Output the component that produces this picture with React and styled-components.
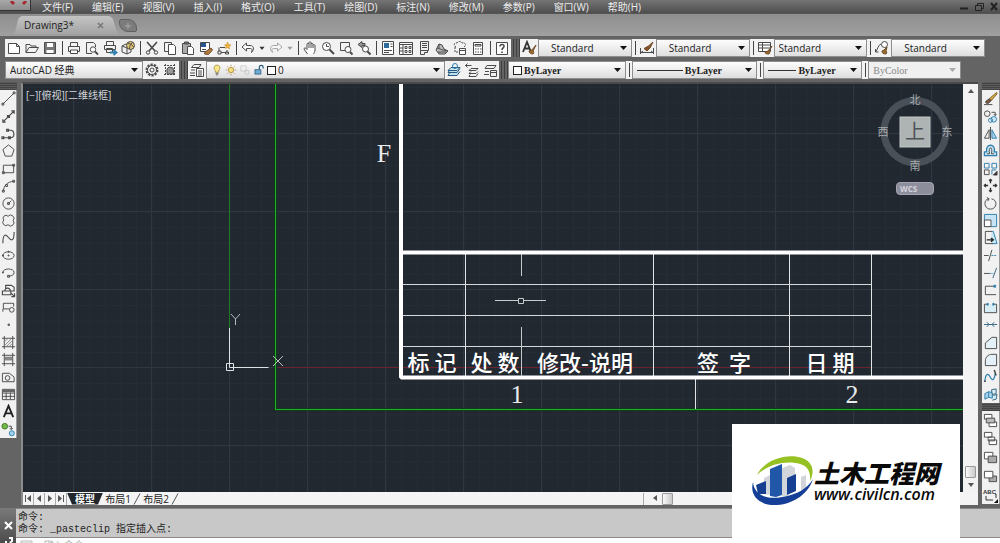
import React from "react";
import styled, { createGlobalStyle } from "styled-components";

const GlobalStyle = createGlobalStyle`
  * {
    box-sizing: border-box;
  }
  body {
    margin: 0;
    overflow: hidden;
    background: #646464;
    font-family: "Open Sans", "Noto Sans CJK SC", sans-serif;
  }
  button, input, select {
    font: inherit;
    color: inherit;
    border: 0;
    padding: 0;
    margin: 0;
    background: none;
  }
`;

const Window = styled.div`
  position: relative;
  display: flex;
  flex-direction: column;
  height: 100vh;
  overflow: hidden;
  background: #646464;
`;

/* ---------- menu bar ---------- */

const MenuBar = styled.header`
  display: flex;
  align-items: center;
  height: 13px;
  flex: none;
  background: linear-gradient(#747474, #4e4e4e);
  color: #ececec;
`;

const AppButton = styled.button`
  width: 31px;
  height: 11px;
  align-self: flex-start;
  background: linear-gradient(#a8a8a8, #8c8c8c);
  border: 1px solid #333;
  border-top: 0;
  border-left: 0;
  line-height: 0;
`;

const Menus = styled.nav`
  display: flex;
  flex: 1;
  gap: 19px;
  padding-left: 11px;
`;

const MenuItem = styled.button`
  font-size: 10px;
  line-height: 12px;
  white-space: nowrap;
`;

const WindowButtons = styled.div`
  display: flex;
  gap: 4px;
`;

const WindowButton = styled.button`
  width: 11px;
  height: 12px;
  line-height: 0;
`;

/* ---------- file tabs ---------- */

const FileTabs = styled.div`
  display: flex;
  align-items: flex-end;
  height: 23px;
  flex: none;
  padding: 0 0 2px 12px;
  background: linear-gradient(#8e8e8e, #a0a0a0);
  border-top: 1px solid #555;
`;

const FileTab = styled.div`
  display: flex;
  align-items: center;
  justify-content: space-between;
  width: 107px;
  height: 18px;
  padding: 0 15px 0 12px;
  background: linear-gradient(#c4c4c4, #a4a4a4);
  clip-path: polygon(0 100%, 3% 88%, 6% 12%, 9% 0, 91% 0, 94% 12%, 98% 88%, 100% 100%);
  color: #222;
  font-size: 10px;
`;

const TabClose = styled.button`
  width: 8px;
  line-height: 0;
`;

const NewTab = styled.button`
  width: 18px;
  height: 13px;
  margin-bottom: 2px;
  background: #7c7c7c;
  border: 1px solid #606060;
  border-radius: 2px 9px 2px 9px;
  line-height: 0;
`;

/* ---------- toolbars ---------- */

const Toolbars = styled.div`
  flex: none;
  display: flex;
  flex-direction: column;
  gap: 4px;
  height: 46px;
  padding: 3px 0 0;
  background: #646464;
`;

const ToolRow = styled.div`
  display: flex;
  align-items: stretch;
  height: 18px;
  padding-left: 5px;
  padding-right: ${(p) => p.$end}px;
`;

const Strip = styled.div`
  display: flex;
  align-items: center;
  flex: ${(p) => (p.$grow ? "1 1 0" : "none")};
  background: #f2f2f2;
`;

const Grip = styled.span`
  width: 9px;
  flex: none;
  background: repeating-linear-gradient(90deg, #646464 0 2px, #3f3f3f 2px 3px);
`;

const ToolButton = styled.button`
  display: flex;
  align-items: center;
  justify-content: center;
  flex: none;
  width: ${(p) => (p.$narrow ? 10 : 18)}px;
  height: 18px;
  opacity: ${(p) => (p.$dim ? 0.45 : 1)};
`;

const Divider = styled.span`
  width: 6px;
  height: 14px;
  flex: none;
  border-left: 1px solid #f2f2f2;
  background: linear-gradient(90deg, transparent 2px, #444 2px 3px, transparent 3px);
`;

const Combo = styled.label`
  display: flex;
  align-items: center;
  flex: 1 1 ${(p) => p.$basis}px;
  min-width: 0;
  height: 18px;
  padding: 0 4px 0 4px;
  gap: 2px;
  background: ${(p) => (p.$off ? "#f0f0f0" : "linear-gradient(#fdfdfd, #dedede)")};
  border: 1px solid #8d8d8d;
  color: ${(p) => (p.$off ? "#888" : "#222")};
`;

const Select = styled.select`
  appearance: none;
  flex: 1;
  min-width: 0;
  height: 16px;
  padding-left: ${(p) => p.$indent || 0}px;
  font-size: 10px;
  font-weight: ${(p) => (p.$bold ? 700 : 400)};
  font-family: ${(p) =>
    p.$serif ? '"Liberation Serif", serif' : '"Open Sans", "Noto Sans CJK SC", sans-serif'};
  outline: none;
  opacity: 1;
  color: inherit;
`;

const Swatch = styled.span`
  width: 9px;
  height: 9px;
  flex: none;
  border: 1px solid #222;
  background: #fff;
`;

const LinePreview = styled.span`
  width: ${(p) => p.$w}px;
  height: 1px;
  flex: none;
  background: #333;
`;

/* ---------- workspace ---------- */

const Workspace = styled.main`
  display: flex;
  flex: 1;
  min-height: 0;
`;

const SideTools = styled.aside`
  display: flex;
  flex-direction: column;
  width: ${(p) => p.$w}px;
  flex: none;
`;

const SideGrip = styled.span`
  height: 8px;
  flex: none;
  background: repeating-linear-gradient(#5a5a5a 0 1px, #444 1px 2px);
`;

const SideStrip = styled.div`
  display: grid;
  grid-auto-rows: 1fr;
  justify-items: center;
  flex: none;
  height: ${(p) => p.$h}px;
  background: #f1f1f1;
  border-right: 1px solid #999;
`;

const SideButton = styled.button`
  width: 16px;
  line-height: 0;
  display: flex;
  align-items: center;
  justify-content: center;
  min-height: 0;
`;

const DocFrame = styled.section`
  display: flex;
  flex-direction: column;
  flex: 1;
  min-width: 0;
  margin: 0 4px 3px;
  border-left: 2px solid #8c8c8c;
  border-top: 2px solid #4a4a4a;
  background: #f4f4f4;
`;

const DocBody = styled.div`
  display: flex;
  flex: 1;
  min-height: 0;
`;

const Canvas = styled.div`
  position: relative;
  flex: 1;
  min-width: 0;
  overflow: hidden;
  background: #212830;
`;

const Drawing = styled.svg`
  display: block;
  width: 100%;
  height: 100%;
`;

const ViewLabel = styled.button`
  position: absolute;
  left: 3px;
  top: 5px;
  color: #d3d6d9;
  font-size: 10px;
  line-height: 13px;
`;

const ViewCube = styled.div`
  position: absolute;
  top: 8px;
  right: 10px;
  display: flex;
  flex-direction: column;
  align-items: center;
`;

const WcsButton = styled.button`
  width: 38px;
  height: 13px;
  margin-top: 9px;
  padding-left: 3px;
  border: 1px solid #a6a6b2;
  border-radius: 4px;
  background: #8d8e9c;
  color: #d4d4dc;
  font-size: 8px;
  font-weight: 700;
  line-height: 10px;
  text-align: left;
`;

const VScroll = styled.div`
  display: flex;
  flex-direction: column;
  align-items: center;
  justify-content: space-between;
  width: 15px;
  flex: none;
  padding: 4px 0;
  background: #f3f3f3;
`;

const ScrollEnd = styled.div`
  display: flex;
  flex-direction: column;
  align-items: center;
  gap: 3px;
`;

const ScrollThumb = styled.span`
  width: 11px;
  height: 12px;
  border: 1px solid #999;
  border-radius: 1px;
  background: linear-gradient(90deg, #fafafa, #c9c9c9);
`;

const ScrollButton = styled.button`
  width: 11px;
  height: 7px;
  line-height: 0;
`;

const LayoutBar = styled.div`
  display: flex;
  align-items: center;
  height: 13px;
  flex: none;
  background: #f4f4f4;
  color: #222;
`;

const LayoutNav = styled.button`
  width: 11px;
  height: 12px;
  border-right: 1px solid #aaa;
  line-height: 0;
`;

const LayoutTab = styled.button`
  height: 12px;
  width: ${(p) => (p.$active ? 36 : 30)}px;
  font-size: 10px;
  line-height: 12px;
  white-space: nowrap;
  font-weight: ${(p) => (p.$active ? 700 : 400)};
  color: ${(p) => (p.$active ? "#fff" : "#222")};
  background: ${(p) => (p.$active ? "#20262c" : "none")};
  clip-path: ${(p) => (p.$active ? "polygon(0 0, 100% 0, 86% 100%, 14% 100%)" : "none")};
`;

const HScroll = styled.div`
  display: flex;
  align-items: center;
  gap: 5px;
  flex: 0 1 335px;
  margin-left: auto;
  padding-left: 2px;
  border-left: 1px solid #aaa;
`;

/* ---------- command line ---------- */

const CommandArea = styled.footer`
  display: flex;
  height: 35px;
  flex: none;
`;

const CommandHandle = styled.div`
  display: flex;
  flex-direction: column;
  align-items: center;
  justify-content: flex-end;
  gap: 7px;
  width: 16px;
  flex: none;
  background: linear-gradient(#7a7a7a, #4c4c4c);
`;

const CommandBody = styled.div`
  flex: 1;
  min-width: 0;
  border-top: 1px solid #888;
  background: #c8c8c8;
`;

const History = styled.div`
  padding: 3px 2px 1px;
  color: #222;
  font-family: "Liberation Mono", "Noto Sans CJK SC", monospace;
  font-size: 10px;
  line-height: 12px;
  white-space: pre;
`;

const Prompt = styled.label`
  display: flex;
  align-items: center;
  gap: 5px;
  height: 14px;
  padding-left: 4px;
  border-top: 1px solid #8a8a8a;
  background: #fff;
`;

const PromptInput = styled.input`
  flex: 1;
  height: 12px;
  font-size: 10px;
  outline: none;
  &::placeholder {
    color: #b4b4b4;
  }
`;

/* ---------- site badge ---------- */

const SiteBadge = styled.a`
  position: absolute;
  right: 40px;
  bottom: 0;
  display: flex;
  align-items: center;
  width: 228px;
  height: 119px;
  padding: 0 0 6px 20px;
  background: #fff;
  color: #0a0a0a;
  text-decoration: none;
`;

const BadgeText = styled.span`
  display: flex;
  flex-direction: column;
  white-space: nowrap;
  font-style: italic;
`;

const BadgeName = styled.strong`
  font-family: "Noto Sans CJK SC", sans-serif;
  font-size: 25px;
  font-weight: 900;
  line-height: 26px;
`;

const BadgeUrl = styled.span`
  font-family: "Open Sans", sans-serif;
  font-size: 16px;
  font-weight: 600;
  line-height: 18px;
`;

/* ---------- icons ---------- */

const K = "#4a4a4a";
const B = "#2f7fae";

const icons = {
  new: <path d="M2.500 3.500h8l3 3v7h-11zM10.500 3.500v3h3" fill="#fff" />,
  open: <path d="M2 12.500v-8h4l1 1.500h5v2M2 12.500l3-5h9.500l-3 5z" />,
  save: (
    <>
      <path d="M2.500 2.500h11v11h-11z" fill="#777" />
      <path d="M5 3h6v4H5zM4.500 10h7v3h-7z" fill="#fff" stroke="none" />
    </>
  ),
  print: (
    <>
      <path d="M4.500 6V2.500h7V6M2.500 6.500h11v5h-11z" />
      <path d="M4.500 10h7v3.500h-7z" fill="#fff" />
    </>
  ),
  preview: (
    <>
      <path d="M8 13.500H2.500v-11h7l2 2V7" />
      <circle cx="9" cy="9.500" r="2.700" fill="#fff" />
      <path d="M11 11.500l3 3" strokeWidth="1.800" />
    </>
  ),
  publish: (
    <>
      <path d="M4.500 5V1.500h7V5M2.500 5.500h11v4h-11zM4.500 8.500h6v4h-6z" />
      <path d="M8 12.500h5M11.500 10l3 2.500-3 2.500" stroke={B} strokeWidth="1.800" />
    </>
  ),
  cube: (
    <>
      <path d="M2 6l4-2 5 2v6l-4 2-5-2zM2 6l5 2 4-2M7 8v6" fill="#eee" />
      <circle cx="10.500" cy="5.500" r="4" fill="#e2c56d" />
      <path d="M8 3.500c2 0 4 1 5.500 3.500M9.500 9c0-3 1-5 3-6.500" />
    </>
  ),
  cut: (
    <>
      <path d="M3 2l8 9M13 2l-8 9" strokeWidth="1.600" />
      <circle cx="4" cy="12.500" r="1.700" />
      <circle cx="12" cy="12.500" r="1.700" />
    </>
  ),
  copy: (
    <>
      <path d="M2.500 2.500h7v9h-7z" />
      <path d="M6.500 4.500h5l2 2v8h-7z" fill="#fff" />
    </>
  ),
  paste: (
    <>
      <path d="M2.500 3.500h8v10h-8z" fill="#aaa" />
      <path d="M4.500 2h4v2h-4z" fill="#777" />
      <path d="M7.500 6.500h4l2 2v6h-6z" fill="#fff" />
    </>
  ),
  match: (
    <>
      <path d="M2.500 2.500h9v9h-9z" fill="#fff" />
      <path d="M3 3h5v4H3z" fill="#25558e" stroke="none" />
      <path d="M4 9.500h4" />
      <path d="M7 12l6-4 1.500 2-4 4.500-4-.5z" fill="#b07a45" stroke="#7a5028" />
    </>
  ),
  block: (
    <>
      <path d="M4 7.500h5M3 7.500v4M2 11h3v3H2zM11 10v3M9.500 12h3v2h-3zM5 12.500h5" />
      <path d="M11.500 2l1 2.500L15 5l-2 1.500.500 2.500-2-1.500-2 1 .500-2.300L8.500 5l2.300-.500z" fill="#f0b640" stroke="#c48b1b" strokeWidth=".6" />
    </>
  ),
  undo: <path d="M6.500 3L2 7l4.500 4V8.500h4c1.500 0 2 1.500 1 4 3-3 2.500-7-1.500-7H6.500z" fill="#fff" />,
  redo: <path d="M9.500 3L14 7l-4.500 4V8.500h-4c-1.500 0-2 1.500-1 4-3-3-2.500-7 1.500-7h3.500z" fill="#fff" />,
  caret: <path d="M4 6h8l-4 5z" fill="#333" stroke="none" />,
  pan: <path d="M5.500 14L2 9c0-1 1-1.500 2-.500l1 1V4c.500-1 1.500-1 2 0V2.500c.500-1 1.500-1 2 0V4c.500-1 1.500-1 2 0v1.500c.500-1 2-1 2 0V10c0 2-1 3-1.500 4M7 4v4M9 4v4M11 5.500V8" fill="#fff" />,
  zoom: (
    <>
      <circle cx="6.500" cy="6.500" r="4" fill="#fff" />
      <path d="M6.500 4v2.500H9" />
      <path d="M9.500 9.500l4.500 4.500" strokeWidth="2" />
    </>
  ),
  zoomWindow: (
    <>
      <path d="M2.500 2.500h9v8h-9z" />
      <circle cx="10" cy="9.500" r="3" fill="#fff" />
      <path d="M12 12l2.500 2.500" strokeWidth="2" />
    </>
  ),
  zoomPrev: (
    <>
      <path d="M6 1.500L2 4.500l4 3v-2h3v-2H6z" fill="#999" />
      <circle cx="9.500" cy="9" r="3" fill="#fff" />
      <path d="M11.500 11.500l3 3" strokeWidth="2" />
    </>
  ),
  props: (
    <>
      <path d="M2.500 1.500h11v13h-11z" fill="#fff" />
      <path d="M4 3h5v5H4z" fill="#2d6c9c" stroke="none" />
      <path d="M4 10.500h8M4 12.500h5M10.500 4h2M10.500 6.500h2" />
    </>
  ),
  center: (
    <>
      <path d="M1.500 2.500h13v12h-13zM1.500 4.500h13" fill="#fff" />
      <path d="M5 5v9M1.500 8h3.500M1.500 11h3.500M7 6.500h2v2H7zM11 6.500h2v2h-2zM7 10.500h2v2H7zM11 10.500h2v2h-2z" />
    </>
  ),
  palette: <path d="M4.500 1.500h8v9h-8zM6 3.500h5M6 5.500h5M6 7.500h5M4.500 10.500v4h4v-2h3v-2" />,
  sheets: <path d="M2 10l3-6 3 1 2 4 4 2-3 3H5zM3 8l6 2 5 1M4 12h8M5 4v4" fill="#bbb" />,
  markup: (
    <>
      <path d="M4 7C1 6 2 2 5 3c1-2 4-2 5 0 3-1 5 2 2 4M3 7v5h3" strokeDasharray="2 1" />
      <path d="M7.500 8.500h6v6h-6zM7.500 10.500h6" fill="#fff" stroke={K} />
    </>
  ),
  calc: <path d="M3.500 2.500h9v12h-9zM5 4.500h6v1.500H5zM5 9h1.500M7.500 9H9M10 9h1.500M5 12h1.500M7.500 12H9M10 12h1.500" fill="#fff" />,
  help: (
    <>
      <path d="M2.500 2.500h11v12h-11z" fill="#fff" />
      <path d="M6 6.500c0-3 4.500-2.500 4 0C9.800 8 8 8 8 10M8 11.500v1.500" strokeWidth="1.600" />
    </>
  ),
  textStyle: (
    <>
      <path d="M2 12L6 2l4 10M3.500 8.500h5" strokeWidth="1.800" stroke="#333" />
      <path d="M15 5l-4 5-3 1c0 2 2 3 4 3 1-1 1-2 0-3z" fill="#9c6a2d" stroke="#6d4b22" />
    </>
  ),
  dimStyle: (
    <>
      <path d="M1.500 8v6M14.500 8v6M2 12.500h12M2 12.500l2-1.500M14 12.500l-2-1.500" />
      <path d="M14 2L9.500 6 5 8.500l3 2.500 3-3z" fill="#86512b" stroke="#6d4b22" />
    </>
  ),
  tableStyle: (
    <>
      <path d="M1.500 2.500h12v9h-12zM1.500 5h12M1.500 8h12M5.500 3v8" fill="#fff" />
      <path d="M15 6l-4 5-3 1c0 2 2 2 4 2 1-1 1-2 0-3z" fill="#9c6a2d" stroke="#6d4b22" />
    </>
  ),
  leader: (
    <>
      <path d="M1.500 12C4 9 4 5 7 4M1.500 12v-3M1.500 12h3" />
      <circle cx="10.500" cy="4.500" r="3" fill="#fff" />
      <path d="M13 7l-3 3-2 1c0 2 1 3 4 3 1-1 1-2 0-3z" fill="#9c6a2d" stroke="#6d4b22" />
    </>
  ),
  gear: (
    <>
      <circle cx="8" cy="8" r="5.500" strokeDasharray="2.200 1.200" strokeWidth="2" />
      <circle cx="8" cy="8" r="4.500" />
      <circle cx="8" cy="8" r="2" />
    </>
  ),
  wsSave: (
    <>
      <path d="M2 3.500h12M2 12.500h12M3.500 2v12M12.500 2v12" strokeDasharray="2 1" />
      <path d="M5 7l2-2 4 1 1 6H5z" fill="#999" />
    </>
  ),
  layers: (
    <>
      <path d="M5 2.500h7l-2 3H2.500zM2 8h4M1 11h5M1 13.500h5" />
      <path d="M7.500 6.500h7v8h-7zM9 9h4M9 11h4M9 13h4" fill="#fff" />
    </>
  ),
  bulb: (
    <>
      <path d="M8 1.500c-4 0-5 4-2.500 7L6 11h4l.5-2.500C13 5.500 12 1.500 8 1.500z" fill="#fbe68a" stroke="#9b8433" />
      <path d="M6 12.500h4M6.500 14.500h3" />
    </>
  ),
  sun: (
    <>
      <circle cx="8" cy="8" r="3.500" fill="#f8df7b" stroke="#a5842d" />
      <path d="M8 1v2M8 13v2M1 8h2M13 8h2M3 3l1.500 1.500M11.500 11.500L13 13M13 3l-1.500 1.500M4.500 11.500L3 13" stroke="#a5842d" />
    </>
  ),
  frozen: <path d="M2.500 2.500h7v7h-7zM8 8.500h5v5H8z" stroke="#c2c2c2" />,
  lock: (
    <>
      <path d="M2.500 7.500h8v6h-8z" fill="#6faad0" stroke="#27597f" />
      <path d="M8.500 7V4c0-3 5-3 5 0v2" stroke="#27597f" strokeWidth="1.600" />
    </>
  ),
  layerCur: (
    <>
      <path d="M5 5.500h9l-3 3H2zM3.500 8.500L2 10.500h9l3-4M3.500 11L2 13.500h9l3-4" fill="#bfe0ef" stroke="#27597f" />
      <circle cx="9" cy="4" r="2.500" stroke={B} />
    </>
  ),
  layerPrev: <path d="M1.500 3.500h6M1.500 3.500l2-2M1.500 3.500l2 2M7 6.500h7l-2 2H5zM7 9.500L5 11.500h7l2-2M6 12.500l-1 2h7l2-3" />,
  layerState: <path d="M5 3.500h9l-2 3H3zM3 9.500h4M2 12.500h5M8.500 8.500h6v6h-6zM8.500 10.500h6" />,

  line: <path d="M2 14L14 2M1 13h2v2H1zM13 1h2v2h-2z" />,
  xline: <path d="M2 14L14 2M2 11v3h3M14 5V2h-3M7 7h2v2H7z" strokeWidth="1.300" />,
  pline: <path d="M2 12.500h8c5 0 5-8 0-8H7M1 11.500h2v2H1zM8 11.500h2v2H8zM6 3.500h2v2H6z" strokeWidth="1.200" />,
  polygon: <path d="M8 2l6 5-2.500 7h-7L2 7z" />,
  rect: <path d="M2.500 4.500h11v8h-11zM1.500 11.500h2v2h-2zM12.500 3.500h2v2h-2z" />,
  arc: <path d="M2.500 14C3 8 7 4 13.500 3.500M1.500 13h2v2h-2zM5 7h2v2H5zM12.500 2.500h2v2h-2z" />,
  circle: (
    <>
      <circle cx="8" cy="8" r="6" />
      <path d="M8 8l3-3M7 7h2v2H7z" />
    </>
  ),
  cloud: <path d="M7.500 3.500a2.800 2.800 0 1 0-4.500 4 3 3 0 1 0 4.500 5 3 3 0 1 0 5.500-4.500A3 3 0 1 0 7.500 3.500z" />,
  spline: <path d="M2 14C2 4 5 4 8 8s6 4 6-6" strokeWidth="1.200" />,
  ellipse: (
    <>
      <ellipse cx="8" cy="8" rx="6" ry="4" />
      <path d="M7.500 7.500h1v1h-1zM1.500 7.500h1v1h-1zM7.500 3.500h1v1h-1z" />
    </>
  ),
  ellArc: <path d="M2 8c0-5 12-5 12 0 0 3-4 4-6 4M1.500 7.500h1v1h-1zM7 11h2v2H7z" />,
  insert: <path d="M5 6V2.500h6l3 2v4h-3M1.500 8.500h9v4h-9zM4 8c1-4 6-3 6 1M11 11l3 3M14.500 11v3.500H11" strokeWidth="1.200" />,
  makeBlock: (
    <>
      <path d="M9 9.500H2.500v-6h11V7M2 9.500v3" />
      <circle cx="11.500" cy="10.500" r="2.500" />
    </>
  ),
  point: <path d="M7.500 7.500h1.500V9H7.500z" />,
  hatch: (
    <>
      <path d="M1 3.500h14M1 12.500h14M3.500 1v14M12.500 1v14" />
      <path d="M4 7l3-3M4 11l7-7M6 12l6-6M9 12l3-3" stroke="#888" />
    </>
  ),
  gradient: (
    <>
      <path d="M4 5h8v4H4z" fill="#888" stroke="none" />
      <path d="M1 3.500h14M1 12.500h14M3.500 1v14M12.500 1v14" />
    </>
  ),
  region: (
    <>
      <path d="M1.500 12.500v-9H9l5 4v5z" />
      <circle cx="7" cy="8.500" r="2.500" />
    </>
  ),
  table: (
    <>
      <path d="M1.500 2.500h13v11h-13zM1.500 6.500h13M1.500 10h13M5.500 6v7M10 6v7" />
      <path d="M2 3h12v2.500H2z" fill="#666" stroke="none" />
    </>
  ),
  text: <path d="M3 14L8 2l5 12M5 10h6" strokeWidth="2" stroke="#222" />,
  addSel: (
    <>
      <circle cx="4" cy="4.500" r="3" fill="#76b84c" stroke="#3f7a24" />
      <circle cx="11.500" cy="12" r="2.700" fill="#9fd2ee" stroke={B} />
      <path d="M8 4.500h3V8M9.500 6.500L11 8l1.500-1.500" />
    </>
  ),

  erase: (
    <>
      <path d="M14.500 1.500L7 8l2 2 6-7z" fill="#d8ae4c" stroke="#7c5d1c" />
      <path d="M7 8l-4 3c-1 2 2 3 3 2l3-3M1 14.500h9" fill="#7b5943" />
    </>
  ),
  copyObj: (
    <>
      <circle cx="4.500" cy="5" r="3" />
      <circle cx="11.500" cy="11" r="3" fill="#cbe7f5" stroke={B} />
      <circle cx="8" cy="12" r="2.200" stroke={B} />
      <path d="M9 3.500h4V7M11.500 5.500L13 7l1.500-1.500" />
    </>
  ),
  mirror: (
    <>
      <path d="M6.500 4v9H1.500z" />
      <path d="M9.500 4v9h5z" fill="#a7d3ea" stroke={B} />
      <path d="M8 1v14" />
    </>
  ),
  offset: (
    <>
      <path d="M1.500 13.500h13V9.500h-2.500C14 0 2 0 4 9.500H1.500z" fill="#cfe8f5" stroke={B} strokeWidth="1.400" />
      <path d="M4 11.500h3C5 3 11 3 9 11.500h3" />
    </>
  ),
  array: (
    <>
      <path d="M1.500 9.500h5v5h-5z" />
      <path d="M1.500 2.500h5v5h-5zM9.500 2.500h5v5h-5zM14 9.500H9.500v5" stroke={B} />
      <path d="M15 11v4h-4z" fill="#222" />
    </>
  ),
  move: <path d="M8 1.500v4M8 10.500v4M1.500 8h4M10.500 8h4M6.500 3L8 1.500 9.500 3M6.500 13L8 14.500 9.500 13M3 6.500L1.500 8 3 9.500M13 6.500L14.500 8 13 9.500" strokeWidth="1.500" stroke="#333" />,
  rotate: <path d="M9 3c7 1 6 11-1 11S0 4 6 3M4 1.500L6.500 3 5 5.500" />,
  scale: (
    <>
      <path d="M1.500 1.500h13v13h-13z" fill="#c7e5f4" stroke={B} />
      <path d="M1.500 7.500h7v7h-7z" fill="#fff" />
    </>
  ),
  stretch: (
    <>
      <path d="M9 1.500h2l4 13H9" fill="#c7e5f4" stroke={B} />
      <path d="M9.500 1.500h-7v13h8" />
      <path d="M4 10.500h6M8.500 8.500l2.500 2-2.500 2" stroke="#222" strokeWidth="1.400" />
    </>
  ),
  trim: (
    <>
      <path d="M1 8h5M9.500 2L6 14" />
      <path d="M9 8h6" stroke={B} strokeDasharray="2 1" />
    </>
  ),
  extend: (
    <>
      <path d="M1 9h6" />
      <path d="M7 9h4" stroke={B} strokeDasharray="2 1" />
      <path d="M14.500 3l-4 11" stroke="#33637f" />
    </>
  ),
  breakPt: (
    <>
      <path d="M14 13.500H2.500v-9h9" />
      <path d="M11.500 3.500h2v2h-2z" fill={B} stroke={B} />
    </>
  ),
  breakObj: (
    <>
      <path d="M5 4.500H1.500v9h13v-9H11" fill="#d9edf7" />
      <path d="M4.500 3.500h1v2h-1zM10.500 3.500h1v2h-1z" fill={B} stroke={B} />
    </>
  ),
  join: <path d="M1 8h14M4 5.500L6.500 8 4 10.500M12 5.500L9.500 8l2.500 2.500" stroke="#33637f" />,
  chamfer: <path d="M2.500 14.500v-6l7-6h5v12z" fill="#e4f1f8" />,
  fillet: <path d="M2.500 14.500v-5c0-4 3-7 7-7h5v12z" fill="#e4f1f8" />,
  blend: (
    <>
      <path d="M2 13C3 3 6 5 8 9s4 3 5-4" stroke={B} strokeWidth="1.300" />
      <path d="M1 13h2M12 1l2 6" strokeWidth="1.600" />
    </>
  ),
  explode: (
    <>
      <path d="M2 7l4-2v6l-4 2zM6 5l4 1v6l-4-1" fill="#a7d3ea" stroke={B} />
      <path d="M9 3l5-1v5l-4 1zM11 9l4-1-1 5-4 1" fill="#d9edf7" stroke="#33637f" />
    </>
  ),
  front: (
    <>
      <path d="M1.500 1.500h8v5h-8zM6.500 9.500h8v5h-8z" fill="#fff" />
      <path d="M3.500 5.500h9v5h-9z" fill="#bbb" />
    </>
  ),
  back: <path d="M5.500 6.500h7v4h-7zM1.500 1.500h8v5h-8zM6.500 9.500h8v5h-8z" fill="#fff" />,
  above: (
    <>
      <path d="M1.500 2.500h9v7h-9z" fill="#fff" />
      <path d="M5.500 6.500h9v7h-9z" fill="#aaa" />
    </>
  ),
  under: (
    <>
      <path d="M6.500 7.500h8v6h-8z" fill="#aaa" />
      <path d="M1.500 2.500h9v7h-9z" fill="#fff" />
    </>
  ),
};

function Icon({ name, size = 16 }) {
  return (
    <svg width={size} height={size} viewBox="0 0 16 16" fill="none" stroke={K} strokeWidth="1" aria-hidden="true">
      {icons[name]}
    </svg>
  );
}

function Caret({ off }) {
  return (
    <svg width="7" height="4" viewBox="0 0 7 4" aria-hidden="true">
      <path d="M0 0h7L3.500 4z" fill={off ? "#aaa" : "#111"} />
    </svg>
  );
}

/* ---------- data ---------- */

const menus = ["文件(F)", "编辑(E)", "视图(V)", "插入(I)", "格式(O)", "工具(T)", "绘图(D)", "标注(N)", "修改(M)", "参数(P)", "窗口(W)", "帮助(H)"];

const standardTools = [
  ["new", "open", "save"],
  ["print", "preview", "publish", "cube"],
  ["cut", "copy", "paste", "match", "block"],
  ["undo", "caret", "redo", "caret"],
  ["pan", "zoom", "zoomWindow", "zoomPrev"],
  ["props", "center", "palette", "sheets", "markup", "calc"],
  ["help"],
];

const styleTools = [
  { icon: "textStyle", label: "文字样式", indent: 8 },
  { icon: "dimStyle", label: "标注样式", indent: 8 },
  { icon: "tableStyle", label: "表格样式", indent: 0 },
  { icon: "leader", label: "多重引线样式", indent: 8 },
];

const drawTools = ["line", "xline", "pline", "polygon", "rect", "arc", "circle", "cloud", "spline", "ellipse", "ellArc", "insert", "makeBlock", "point", "hatch", "gradient", "region", "table", "text", "addSel"];

const modifyTools = ["erase", "copyObj", "mirror", "offset", "array", "move", "rotate", "scale", "stretch", "trim", "extend", "breakPt", "breakObj", "join", "chamfer", "fillet", "blend", "explode"];

const orderTools = ["front", "back", "above", "under"];

const blockLabels = [
  { text: "标 记", x: 432 },
  { text: "处 数", x: 495 },
  { text: "修改-说明", x: 585 },
  { text: "签  字", x: 724 },
  { text: "日 期", x: 830 },
];

/* ---------- parts ---------- */

function StandardToolbar() {
  return (
    <ToolRow $end={15}>
      <Strip>
        {standardTools.map((group, g) => (
          <React.Fragment key={g}>
            {g > 0 && <Divider />}
            {group.map((name, i) => (
              <ToolButton key={i} aria-label={name} $narrow={name === "caret"} $dim={g === 3 && i > 1}>
                <Icon name={name} size={name === "caret" ? 10 : 16} />
              </ToolButton>
            ))}
          </React.Fragment>
        ))}
      </Strip>
      <Grip />
      <Strip $grow>
        {styleTools.map((tool, i) => (
          <React.Fragment key={tool.icon}>
            {i > 0 && <Divider />}
            <ToolButton aria-label={tool.label}>
              <Icon name={tool.icon} />
            </ToolButton>
            <Combo $basis={94}>
              <Select aria-label={tool.label} $indent={tool.indent}>
                <option>Standard</option>
              </Select>
              <Caret />
            </Combo>
          </React.Fragment>
        ))}
      </Strip>
    </ToolRow>
  );
}

const WorkspaceStrip = styled(Strip)`
  width: 174px;
`;

const LayerStrip = styled(Strip)`
  width: 311px;
`;

function PropertiesToolbar() {
  return (
    <ToolRow $end={39}>
      <WorkspaceStrip>
        <Combo $basis={138}>
          <Select aria-label="工作空间">
            <option>AutoCAD 经典</option>
          </Select>
          <Caret />
        </Combo>
        <ToolButton aria-label="工作空间设置"><Icon name="gear" /></ToolButton>
        <ToolButton aria-label="我的工作空间"><Icon name="wsSave" /></ToolButton>
      </WorkspaceStrip>
      <Grip />
      <LayerStrip>
        <ToolButton aria-label="图层特性"><Icon name="layers" /></ToolButton>
        <Combo $basis={236}>
          <Icon name="bulb" size={12} />
          <Icon name="sun" size={12} />
          <Icon name="frozen" size={12} />
          <Icon name="lock" size={12} />
          <Swatch />
          <Select aria-label="图层">
            <option>0</option>
          </Select>
          <Caret />
        </Combo>
        <ToolButton aria-label="置为当前"><Icon name="layerCur" /></ToolButton>
        <ToolButton aria-label="上一个图层"><Icon name="layerPrev" /></ToolButton>
        <ToolButton aria-label="图层状态"><Icon name="layerState" /></ToolButton>
      </LayerStrip>
      <Grip />
      <Strip $grow>
        <Combo $basis={118}>
          <Swatch />
          <Select aria-label="颜色" $serif $bold>
            <option>ByLayer</option>
          </Select>
          <Caret />
        </Combo>
        <Divider />
        <Combo $basis={126}>
          <LinePreview $w={46} />
          <Select aria-label="线型" $serif $bold>
            <option>ByLayer</option>
          </Select>
          <Caret />
        </Combo>
        <Divider />
        <Combo $basis={99}>
          <LinePreview $w={28} />
          <Select aria-label="线宽" $serif $bold>
            <option>ByLayer</option>
          </Select>
          <Caret />
        </Combo>
        <Divider />
        <Combo $basis={93} $off>
          <Select aria-label="打印样式" $serif disabled>
            <option>ByColor</option>
          </Select>
          <Caret off />
        </Combo>
      </Strip>
    </ToolRow>
  );
}

function TitleBlock() {
  return (
    <Drawing role="img" aria-label="图纸标题栏">
      <defs>
        <pattern id="minor" width="15.600" height="15.600" x="229.500" y="367.500" patternUnits="userSpaceOnUse">
          <path d="M0 .5H15.600M.5 0V15.600" stroke="#252c35" />
        </pattern>
        <pattern id="major" width="78" height="78" x="229" y="367" patternUnits="userSpaceOnUse">
          <path d="M0 .5H78M.5 0V78" stroke="#2f3841" />
        </pattern>
      </defs>
      <g transform="translate(-23 -84)" fill="none">
        <rect x="0" y="0" width="3000" height="2000" fill="url(#minor)" />
        <rect x="0" y="0" width="3000" height="2000" fill="url(#major)" />
        <path d="M278 367.500H871" stroke="#6a2430" />
        <path d="M229.500 84V328" stroke="#1c7a22" />
        <path d="M275.500 84V409.500H3000" stroke="#12381a" strokeWidth="3" />
        <path d="M275.500 84V409.500H3000" stroke="#1fae28" />

        <path d="M402 284.500H871M402 315.500H871M402 346.500H871" stroke="#d6d9db" />
        <path d="M465.500 253V377M653.500 253V377M789.500 253V377M871.500 253V377M695.500 379V409" stroke="#e2e4e6" />
        <path d="M401 84V377.500H3000M401 252.500H3000" stroke="#fff" strokeWidth="4" strokeLinejoin="bevel" />

        <g stroke="#c9ccce">
          <path d="M521.500 254V276M521.500 327V376" />
          <path d="M495 300.500H518M524 300.500H546M518.500 298.500h5v5h-5z" />
        </g>
        <g stroke="#dfe2e4">
          <path d="M226.500 363.500h7v7h-7zM229.500 328V367.500H268.500" />
          <path d="M231 314l4.500 5v6M240 314l-4.500 5M273 356l10 10M283 356l-10 10" stroke="#b9bdc0" />
        </g>

        <g fill="#fff" fontFamily='"Noto Sans CJK SC", sans-serif' fontSize="22" fontWeight="500" textAnchor="middle">
          {blockLabels.map((label) => (
            <text key={label.text} x={label.x} y="371" style={{ whiteSpace: "pre" }}>
              {label.text}
            </text>
          ))}
        </g>
        <g fill="#e8eaec" fontFamily='"Liberation Serif", serif' textAnchor="middle">
          <text x="384" y="162" fontSize="26">F</text>
          <text x="517" y="403" fontSize="26">1</text>
          <text x="852" y="403" fontSize="26">2</text>
        </g>
      </g>
    </Drawing>
  );
}

function Compass() {
  return (
    <svg width="76" height="81" viewBox="0 0 76 81" aria-label="ViewCube">
      <circle cx="38" cy="39.500" r="31" fill="none" stroke="#4a5058" strokeWidth="7" />
      <rect x="23" y="25" width="30" height="30" fill="#aeb3b4" stroke="#c2c6c6" />
      <g fontFamily='"Noto Sans CJK SC", sans-serif' fontSize="11" textAnchor="middle" fill="#a6abaf">
        <text x="38" y="12">北</text>
        <text x="38" y="78">南</text>
        <text x="6" y="44">西</text>
        <text x="70" y="44">东</text>
        <text x="38" y="47" fontSize="20" fill="#4e5557">上</text>
      </g>
    </svg>
  );
}

function Arrow({ d }) {
  return (
    <svg width="10" height="7" viewBox="0 0 10 7" aria-hidden="true">
      <path d={d} fill="#555" />
    </svg>
  );
}

const navArrows = [
  ["第一个", "M2 0h1v7H2zM8 0v7L4 3.500z"],
  ["上一个", "M7 0v7L3 3.500z"],
  ["下一个", "M3 0v7l4-3.500z"],
  ["最后一个", "M2 0v7l4-3.500zM7 0h1v7H7z"],
];

function Slash() {
  return (
    <svg width="8" height="12" viewBox="0 0 8 12" aria-hidden="true">
      <path d="M1 11.500L7 .5" stroke="#555" />
    </svg>
  );
}

function Layouts() {
  return (
    <LayoutBar>
      {navArrows.map(([label, d]) => (
        <LayoutNav key={label} aria-label={label}>
          <Arrow d={d} />
        </LayoutNav>
      ))}
      <LayoutTab $active>模型</LayoutTab>
      <LayoutTab>布局1</LayoutTab>
      <Slash />
      <LayoutTab>布局2</LayoutTab>
      <Slash />
      <HScroll>
        <ScrollButton aria-label="向左"><Arrow d="M10 0v6L6 3z" /></ScrollButton>
        <ScrollThumb />
      </HScroll>
    </LayoutBar>
  );
}

function BadgeLogo() {
  return (
    <svg width="62" height="52" viewBox="0 0 62 52" aria-hidden="true">
      <path d="M5 20C13 4 36-2 50 3c11 4 13 13 8 23 1-10-3-15-10-17C35 5 16 9 5 20z" fill="#95c122" />
      <path d="M12 23l6-3v20l-6-1zM30 13l8-3 5 3v10l-7 4v14h-6zM49 22l5-2v14l-5 3z" fill="#d2d5d9" />
      <path d="M4 30l10-4v13H6z" fill="#173f91" />
      <path d="M18 14l12-5v31l-6 2-6-1z" fill="#2157a8" />
      <path d="M35 23l9-4v17l-9 4z" fill="#173f91" />
      <path d="M1 27c1 13 14 18 29 15 15-2 26-9 31-18-4 14-19 25-36 26C9 51-3 42 1 27z" fill="#153f96" />
    </svg>
  );
}

function App() {
  return (
    <>
      <GlobalStyle />
      <Window>
        <MenuBar>
          <AppButton aria-label="应用程序菜单">
            <svg width="30" height="9" viewBox="0 0 30 9">
              <path d="M11 0l3 3M26 0l-3 3" stroke="#a32a2e" strokeWidth="3" fill="none" />
            </svg>
          </AppButton>
          <Menus>
            {menus.map((m) => (
              <MenuItem key={m}>{m}</MenuItem>
            ))}
          </Menus>
          <WindowButtons>
            <WindowButton aria-label="最小化">
              <svg width="11" height="12"><path d="M1 7.500h8" stroke="#222" strokeWidth="2" /></svg>
            </WindowButton>
            <WindowButton aria-label="还原">
              <svg width="11" height="12"><path d="M3.500 4V2.500h6v5H8M1.500 4.500h6v5h-6z" stroke="#222" fill="none" /></svg>
            </WindowButton>
            <WindowButton aria-label="关闭">
              <svg width="11" height="12"><path d="M2 2l6 7M8 2L2 9" stroke="#222" strokeWidth="2" /></svg>
            </WindowButton>
          </WindowButtons>
        </MenuBar>

        <FileTabs>
          <FileTab>
            Drawing3*
            <TabClose aria-label="关闭图形">
              <svg width="7" height="7"><path d="M1 1l5 5M6 1L1 6" stroke="#777" strokeWidth="1.500" /></svg>
            </TabClose>
          </FileTab>
          <NewTab aria-label="新图形">
            <svg width="8" height="8"><path d="M4 1v6M1 4h6" stroke="#aaa" /></svg>
          </NewTab>
        </FileTabs>

        <Toolbars>
          <StandardToolbar />
          <PropertiesToolbar />
        </Toolbars>

        <Workspace>
          <SideTools $w={17}>
            <SideGrip />
            <SideStrip $h={348}>
              {drawTools.map((name) => (
                <SideButton key={name} aria-label={name}><Icon name={name} size={15} /></SideButton>
              ))}
            </SideStrip>
          </SideTools>

          <DocFrame>
            <DocBody>
              <Canvas>
                <TitleBlock />
                <ViewLabel>[−][俯视][二维线框]</ViewLabel>
                <ViewCube>
                  <Compass />
                  <WcsButton>WCS</WcsButton>
                </ViewCube>
              </Canvas>
              <VScroll>
                <ScrollButton aria-label="向上"><Arrow d="M2 5h6L5 1z" /></ScrollButton>
                <ScrollEnd>
                  <ScrollThumb />
                  <ScrollButton aria-label="向下"><Arrow d="M2 2h6L5 6z" /></ScrollButton>
                </ScrollEnd>
              </VScroll>
            </DocBody>
            <Layouts />
          </DocFrame>

          <SideTools $w={18}>
            <SideGrip />
            <SideStrip $h={313}>
              {modifyTools.map((name) => (
                <SideButton key={name} aria-label={name}><Icon name={name} size={15} /></SideButton>
              ))}
            </SideStrip>
            <SideGrip />
            <SideStrip $h={93}>
              {orderTools.map((name) => (
                <SideButton key={name} aria-label={name}><Icon name={name} size={15} /></SideButton>
              ))}
              <SideButton aria-label="注释前置">
                <svg width="16" height="16" viewBox="0 0 16 16">
                  <text x="0" y="7" fontFamily="Liberation Sans, sans-serif" fontSize="6" fontWeight="700" fill="#333">ABC</text>
                  <path d="M3 9v4h7M12 7h1v4" stroke="#333" fill="none" />
                  <path d="M15 12v4h-4z" fill="#111" />
                </svg>
              </SideButton>
            </SideStrip>
          </SideTools>
        </Workspace>

        <CommandArea>
          <CommandHandle>
            <svg width="9" height="9" aria-hidden="true"><path d="M1 1l7 7M8 1L1 8" stroke="#fff" strokeWidth="2" /></svg>
            <svg width="9" height="6" aria-hidden="true"><path d="M1 5h2M5 1h3v3l-2 2" stroke="#fff" strokeWidth="2" fill="none" /></svg>
          </CommandHandle>
          <CommandBody>
            <History>{"命令:\n命令: _pasteclip 指定插入点:"}</History>
            <Prompt>
              <svg width="13" height="10" aria-hidden="true"><path d="M1 1h11v8H1zM1 3h11" stroke="#bbb" fill="none" /></svg>
              <PromptInput aria-label="命令行" placeholder="- 键入命令" />
            </Prompt>
          </CommandBody>
        </CommandArea>

        <SiteBadge href="#">
          <BadgeLogo />
          <BadgeText>
            <BadgeName>土木工程网</BadgeName>
            <BadgeUrl>www.civilcn.com</BadgeUrl>
          </BadgeText>
        </SiteBadge>
      </Window>
    </>
  );
}

export default App;
